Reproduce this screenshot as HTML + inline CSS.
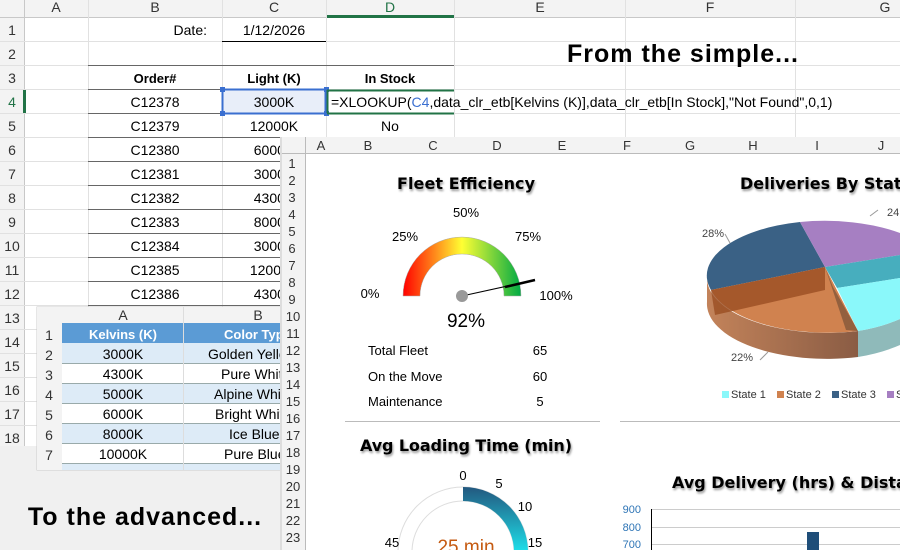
<!DOCTYPE html>
<html><head><meta charset="utf-8"><style>
*{margin:0;padding:0;box-sizing:border-box}
html,body{width:900px;height:550px;overflow:hidden}
body{background:#f0f0f0;font-family:"Liberation Sans",sans-serif;position:relative;color:#000}
.abs{position:absolute}
</style></head><body>
<svg class="abs" style="left:0;top:0;display:block" width="900" height="550" xmlns="http://www.w3.org/2000/svg" font-family="Liberation Sans, sans-serif">
<rect x="0" y="0" width="900" height="446" fill="#fff"/>
<rect x="0" y="0" width="900" height="17" fill="#f3f3f3"/>
<rect x="0" y="0" width="24" height="446" fill="#f3f3f3"/>
<line x1="0" y1="17.5" x2="900" y2="17.5" stroke="#c8c8c8"/>
<line x1="24.5" y1="0" x2="24.5" y2="446" stroke="#c8c8c8"/>
<rect x="326" y="15" width="128" height="3" fill="#217346"/>
<rect x="23" y="89" width="3" height="24" fill="#217346"/>
<g stroke="#e1e1e1">
<line x1="88.5" y1="0" x2="88.5" y2="446"/><line x1="222.5" y1="0" x2="222.5" y2="446"/><line x1="326.5" y1="0" x2="326.5" y2="446"/><line x1="454.5" y1="0" x2="454.5" y2="446"/><line x1="625.5" y1="0" x2="625.5" y2="446"/><line x1="795.5" y1="0" x2="795.5" y2="446"/>
<line x1="0" y1="41.5" x2="900" y2="41.5"/><line x1="0" y1="65.5" x2="900" y2="65.5"/><line x1="0" y1="89.5" x2="900" y2="89.5"/><line x1="0" y1="113.5" x2="900" y2="113.5"/><line x1="0" y1="137.5" x2="900" y2="137.5"/><line x1="0" y1="161.5" x2="282" y2="161.5"/><line x1="0" y1="185.5" x2="282" y2="185.5"/><line x1="0" y1="209.5" x2="282" y2="209.5"/><line x1="0" y1="233.5" x2="282" y2="233.5"/><line x1="0" y1="257.5" x2="282" y2="257.5"/><line x1="0" y1="281.5" x2="282" y2="281.5"/><line x1="0" y1="305.5" x2="282" y2="305.5"/><line x1="0" y1="329.5" x2="40" y2="329.5"/><line x1="0" y1="353.5" x2="40" y2="353.5"/><line x1="0" y1="377.5" x2="40" y2="377.5"/><line x1="0" y1="401.5" x2="40" y2="401.5"/><line x1="0" y1="425.5" x2="40" y2="425.5"/>
</g>
<g stroke="#666"><line x1="88" y1="65.5" x2="454" y2="65.5"/><line x1="88" y1="89.5" x2="326" y2="89.5"/><line x1="88" y1="113.5" x2="222" y2="113.5"/><line x1="88" y1="137.5" x2="282" y2="137.5"/><line x1="88" y1="161.5" x2="282" y2="161.5"/><line x1="88" y1="185.5" x2="282" y2="185.5"/><line x1="88" y1="209.5" x2="282" y2="209.5"/><line x1="88" y1="233.5" x2="282" y2="233.5"/><line x1="88" y1="257.5" x2="282" y2="257.5"/><line x1="88" y1="281.5" x2="282" y2="281.5"/><line x1="88" y1="305.5" x2="282" y2="305.5"/><line x1="222" y1="41.5" x2="326" y2="41.5" stroke="#000"/></g>
<rect x="222.5" y="89.5" width="103" height="24" fill="#e8eef9" stroke="#3a6fd0" stroke-width="2"/>
<g fill="#3a6fd0"><rect x="220" y="87" width="5" height="5"/><rect x="324" y="87" width="5" height="5"/><rect x="220" y="111" width="5" height="5"/><rect x="324" y="111" width="5" height="5"/></g>
<path d="M327 90.5H454M327 113.5H454M327.5 90V113" stroke="#217346" stroke-width="2" fill="none"/>
<g font-size="14" fill="#000" text-anchor="middle">
<text x="56" y="12" fill="#333">A</text><text x="155" y="12" fill="#333">B</text><text x="274" y="12" fill="#333">C</text><text x="390" y="12" fill="#217346">D</text><text x="540" y="12" fill="#333">E</text><text x="710" y="12" fill="#333">F</text><text x="885" y="12" fill="#333">G</text>
<text x="12" y="35" fill="#333">1</text><text x="12" y="59" fill="#333">2</text><text x="12" y="83" fill="#333">3</text><text x="12" y="107" fill="#217346">4</text><text x="12" y="131" fill="#333">5</text><text x="12" y="155" fill="#333">6</text><text x="12" y="179" fill="#333">7</text><text x="12" y="203" fill="#333">8</text><text x="12" y="227" fill="#333">9</text><text x="12" y="251" fill="#333">10</text><text x="12" y="275" fill="#333">11</text><text x="12" y="299" fill="#333">12</text><text x="12" y="323" fill="#333">13</text><text x="12" y="347" fill="#333">14</text><text x="12" y="371" fill="#333">15</text><text x="12" y="395" fill="#333">16</text><text x="12" y="419" fill="#333">17</text><text x="12" y="443" fill="#333">18</text>
<text x="274" y="35">1/12/2026</text>
<text x="155" y="83" font-weight="bold" font-size="13">Order#</text><text x="274" y="83" font-weight="bold" font-size="13">Light (K)</text><text x="390" y="83" font-weight="bold" font-size="13">In Stock</text>
<text x="155" y="107">C12378</text><text x="274" y="107">3000K</text>
<text x="155" y="131">C12379</text><text x="274" y="131">12000K</text><text x="390" y="131">No</text>
<text x="155" y="155">C12380</text><text x="274" y="155">6000K</text>
<text x="155" y="179">C12381</text><text x="274" y="179">3000K</text>
<text x="155" y="203">C12382</text><text x="274" y="203">4300K</text>
<text x="155" y="227">C12383</text><text x="274" y="227">8000K</text>
<text x="155" y="251">C12384</text><text x="274" y="251">3000K</text>
<text x="155" y="275">C12385</text><text x="274" y="275">12000K</text>
<text x="155" y="299">C12386</text><text x="274" y="299">4300K</text>
</g>
<text x="207" y="35" font-size="14" text-anchor="end">Date:</text>
<text x="331" y="107" font-size="14">=XLOOKUP(<tspan fill="#3a6fd0">C4</tspan>,data_clr_etb[Kelvins (K)],data_clr_etb[In Stock],"Not Found",0,1)</text>
<text x="683" y="62" font-size="25" font-weight="bold" text-anchor="middle" letter-spacing="1">From the simple...</text>
<text x="145" y="525" font-size="25" font-weight="bold" text-anchor="middle" letter-spacing="1">To the advanced...</text>

<rect x="37" y="307" width="253" height="163" fill="#fff" stroke="#ccc"/>
<rect x="37" y="307" width="253" height="16" fill="#f3f3f3"/>
<rect x="37" y="307" width="25" height="163" fill="#f3f3f3"/>
<rect x="62" y="323" width="228" height="20" fill="#5b9bd5"/>
<rect x="62" y="343" width="228" height="20" fill="#ddebf7"/>
<rect x="62" y="383" width="228" height="20" fill="#ddebf7"/>
<rect x="62" y="423" width="228" height="20" fill="#ddebf7"/>
<rect x="62" y="463" width="228" height="7" fill="#ddebf7"/>
<g stroke="#9aa"><line x1="62" y1="363.5" x2="290" y2="363.5"/><line x1="62" y1="383.5" x2="290" y2="383.5"/><line x1="62" y1="403.5" x2="290" y2="403.5"/><line x1="62" y1="423.5" x2="290" y2="423.5"/><line x1="62" y1="443.5" x2="290" y2="443.5"/><line x1="62" y1="463.5" x2="290" y2="463.5"/></g>
<line x1="183.5" y1="307" x2="183.5" y2="470" stroke="#ddd"/>
<g font-size="14" text-anchor="middle" fill="#333">
<text x="123" y="320">A</text><text x="258" y="320">B</text>
<text x="49" y="340">1</text><text x="49" y="360">2</text><text x="49" y="380">3</text><text x="49" y="400">4</text><text x="49" y="420">5</text><text x="49" y="440">6</text><text x="49" y="460">7</text>
</g>
<g font-size="14" text-anchor="middle">
<text x="123" y="339" fill="#fff" font-weight="bold" font-size="13">Kelvins (K)</text>
<text x="123" y="359">3000K</text><text x="123" y="379">4300K</text><text x="123" y="399">5000K</text><text x="123" y="419">6000K</text><text x="123" y="439">8000K</text><text x="123" y="459">10000K</text>
</g>
<g font-size="14">
<text x="224" y="339" fill="#fff" font-weight="bold" font-size="13">Color Type</text>
<text x="208" y="359">Golden Yellow</text><text x="221" y="379">Pure White</text><text x="214" y="399">Alpine White</text><text x="215" y="419">Bright White</text><text x="229" y="439">Ice Blue</text><text x="224" y="459">Pure Blue</text>
</g>

<rect x="282" y="137" width="618" height="413" fill="#fff"/>
<rect x="280" y="137" width="2" height="413" fill="#ddd"/>
<rect x="282" y="137" width="618" height="16" fill="#f3f3f3"/>
<rect x="282" y="137" width="23" height="413" fill="#f3f3f3"/>
<line x1="282" y1="153.5" x2="900" y2="153.5" stroke="#bbb"/>
<line x1="305.5" y1="137" x2="305.5" y2="550" stroke="#bbb"/>
<g font-size="13" fill="#333" text-anchor="middle">
<text x="321" y="150">A</text><text x="368" y="150">B</text><text x="433" y="150">C</text><text x="497" y="150">D</text><text x="562" y="150">E</text><text x="627" y="150">F</text><text x="690" y="150">G</text><text x="753" y="150">H</text><text x="817" y="150">I</text><text x="881" y="150">J</text>
<text x="292" y="168">1</text><text x="292" y="185">2</text><text x="292" y="202">3</text><text x="292" y="219">4</text><text x="292" y="236">5</text><text x="292" y="253">6</text><text x="292" y="270">7</text><text x="292" y="287">8</text><text x="292" y="304">9</text><text x="293" y="321">10</text><text x="293" y="338">11</text><text x="293" y="355">12</text><text x="293" y="372">13</text><text x="293" y="389">14</text><text x="293" y="406">15</text><text x="293" y="423">16</text><text x="293" y="440">17</text><text x="293" y="457">18</text><text x="293" y="474">19</text><text x="293" y="491">20</text><text x="293" y="508">21</text><text x="293" y="525">22</text><text x="293" y="542">23</text>
</g>
<g font-family="DejaVu Sans, sans-serif" font-weight="bold" font-size="16" style="text-shadow:1px 2px 2px #999">
<text x="397" y="189" textLength="138">Fleet Efficiency</text>
<text x="740" y="189">Deliveries By State</text>
<text x="360" y="451" textLength="212">Avg Loading Time (min)</text>
<text x="672" y="488">Avg Delivery (hrs) &amp; Distance</text>
</g>
<defs>
<linearGradient id="gg" x1="0" x2="1"><stop offset="0" stop-color="#f00"/><stop offset=".5" stop-color="#ff3"/><stop offset="1" stop-color="#0a4"/></linearGradient>
<linearGradient id="tg" x1="0" y1="0" x2="0" y2="1"><stop offset="0" stop-color="#23587f"/><stop offset="1" stop-color="#1de0ea"/></linearGradient>
<linearGradient id="og" x1="0" x2="1"><stop offset="0" stop-color="#c3835a"/><stop offset="1" stop-color="#8a5c44"/></linearGradient>
</defs>
<path d="M403 296A59 59 0 0 1 521 296H504A42 42 0 0 0 420 296Z" fill="url(#gg)" stroke="#aaa" stroke-width=".5"/>
<line x1="462" y1="296" x2="535" y2="280" stroke="#000" stroke-width="1"/>
<line x1="505" y1="287" x2="535" y2="280" stroke="#000" stroke-width="2.5"/>
<circle cx="462" cy="296" r="6" fill="#999"/>
<g font-size="13" text-anchor="middle">
<text x="370" y="298">0%</text><text x="405" y="241">25%</text><text x="466" y="217">50%</text><text x="528" y="241">75%</text><text x="556" y="300">100%</text>
<text x="466" y="327" font-size="19">92%</text>
</g>
<g font-size="13"><text x="368" y="355">Total Fleet</text><text x="368" y="381">On the Move</text><text x="368" y="406">Maintenance</text>
<text x="540" y="355" text-anchor="middle">65</text><text x="540" y="381" text-anchor="middle">60</text><text x="540" y="406" text-anchor="middle">5</text></g>
<line x1="345" y1="421.5" x2="600" y2="421.5" stroke="#bbb"/>
<line x1="620" y1="421.5" x2="900" y2="421.5" stroke="#bbb"/>
<circle cx="463" cy="552" r="65" fill="none" stroke="#ddd" stroke-width="1"/>
<circle cx="463" cy="552" r="51" fill="none" stroke="#ddd" stroke-width="1"/>
<path d="M463 487A65 65 0 0 1 528 552H514A51 51 0 0 0 463 501Z" fill="url(#tg)"/>
<g font-size="13" text-anchor="middle"><text x="463" y="480">0</text><text x="499" y="488">5</text><text x="525" y="511">10</text><text x="535" y="547">15</text><text x="392" y="547">45</text></g>
<text x="466" y="553" font-size="19" fill="#c55a11" text-anchor="middle">25 min</text>
<!-- pie -->
<path d="M707 276V302A120 55 0 0 0 858 357V331A120 55 0 0 1 707 276Z" fill="url(#og)"/>
<path d="M858 331V357A120 55 0 0 0 900 345V319A120 55 0 0 1 858 331Z" fill="#8fbaba"/>
<path d="M825 267L800 222A120 55 0 0 0 711 290Z" fill="#3a6185"/>
<path d="M825 267L711 290A120 55 0 0 0 858 331Z" fill="#d0824f"/>
<path d="M825 267L800 222A120 55 0 0 1 900 233V255Z" fill="#a67fc2"/>
<path d="M825 267L900 255V278L837 288Z" fill="#47aebe"/>
<path d="M837 288L900 278V319A120 55 0 0 1 858 331Z" fill="#8af8fa"/>
<path d="M711 290L825 267L825 290L715 315Z" fill="#9a4e22" opacity=".8"/>
<path d="M825 267L833 287L858 331L846 330Z" fill="#6b4a33" opacity=".6"/>
<g stroke="#999" fill="none"><path d="M725 234L730 243"/><path d="M760 360L768 352"/><path d="M870 216L878 210"/></g>
<g font-size="11" fill="#444"><text x="702" y="237">28%</text><text x="731" y="361">22%</text><text x="887" y="216">24</text></g>
<g font-size="11" fill="#333"><rect x="722" y="391" width="7" height="7" fill="#8af8fa"/><text x="731" y="398">State 1</text><rect x="777" y="391" width="7" height="7" fill="#d0824f"/><text x="786" y="398">State 2</text><rect x="832" y="391" width="7" height="7" fill="#3a6185"/><text x="841" y="398">State 3</text><rect x="887" y="391" width="7" height="7" fill="#a67fc2"/><text x="896" y="398">S</text></g>
<g stroke="#ccc"><line x1="651" y1="509.5" x2="900" y2="509.5"/><line x1="651" y1="527.5" x2="900" y2="527.5"/><line x1="651" y1="544.5" x2="900" y2="544.5"/></g>
<line x1="651.5" y1="509" x2="651.5" y2="550" stroke="#000"/>
<g font-size="11" fill="#2e75b6" text-anchor="end"><text x="641" y="513">900</text><text x="641" y="531">800</text><text x="641" y="548">700</text></g>
<rect x="807" y="532" width="12" height="18" fill="#1f4e79"/>
</svg>
</body></html>
